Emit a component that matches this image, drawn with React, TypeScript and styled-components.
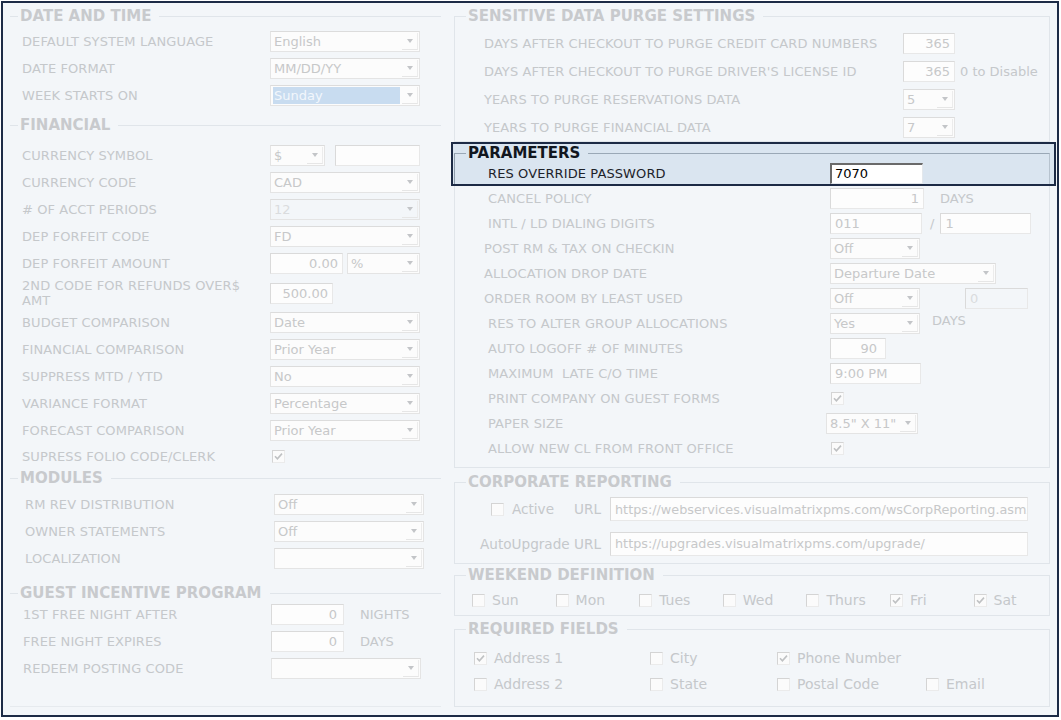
import React from 'react';
import styled, { createGlobalStyle } from 'styled-components';

const GlobalStyle = createGlobalStyle`
  html, body {
    margin: 0;
    padding: 0;
    background: #ffffff;
  }
`;

const line = '#e0e5ea';
const fadedText = '#c5c8cb';
const fieldText = '#c7c8c9';

const Page = styled.div`
  box-sizing: border-box;
  width: 1058px;
  height: 716px;
  margin: 1px 0 0 1px;
  border: 2px solid #1d2b46;
  background: #f3f6f9;
  display: flex;
  font-family: 'DejaVu Sans', Verdana, sans-serif;
  font-size: 13px;
  color: ${fadedText};
  overflow: hidden;
`;

const LeftColumn = styled.div`
  box-sizing: border-box;
  width: 448px;
  padding: 0 10px 8px 7px;
  display: flex;
  flex-direction: column;
`;

const RightColumn = styled.div`
  box-sizing: border-box;
  width: 606px;
  padding: 0 7px 0 3px;
  display: flex;
  flex-direction: column;
`;

const Group = styled.fieldset<{ $mt?: number; $pt?: number; $pb?: number; $box?: boolean; $grow?: boolean; $dark?: boolean }>`
  margin: ${(p) => p.$mt ?? 0}px 0 0 0;
  padding: ${(p) => p.$pt ?? 0}px 0 ${(p) => p.$pb ?? 0}px 0;
  min-width: 0;
  border: 0;
  border-top: 1px solid ${(p) => (p.$dark ? '#9aa8b6' : line)};
  ${(p) => p.$box && `border-left: 1px solid ${line}; border-right: 1px solid ${line}; border-bottom: 1px solid ${line};`}
  ${(p) => p.$dark && `border-left: 1px solid #8e9cab; border-right: 1px solid #b7c3cf;`}
  ${(p) => p.$grow && `flex: 1; border-bottom: 1px solid #e6eaee;`}
`;

const Title = styled.legend<{ $h?: number; $ml?: number; $dark?: boolean }>`
  margin-left: ${(p) => p.$ml ?? 8}px;
  padding: 0 8px 0 2px;
  line-height: ${(p) => p.$h ?? 20}px;
  font-size: 15px;
  font-weight: bold;
  color: ${(p) => (p.$dark ? '#11161e' : '#c8cacd')};
`;

const Row = styled.div<{ $h: number; $indent: number; $label: number }>`
  display: grid;
  grid-template-columns: ${(p) => p.$label}px auto;
  align-items: center;
  height: ${(p) => p.$h}px;
  padding-left: ${(p) => p.$indent}px;
`;

const Label = styled.span<{ $dark?: boolean }>`
  white-space: pre;
  line-height: 15px;
  letter-spacing: 0.1px;
  color: ${(p) => (p.$dark ? '#1d222a' : fadedText)};
`;

const Controls = styled.div`
  display: flex;
  align-items: center;
`;

const SelectBox = styled.div<{ $w: number; $disabled?: boolean }>`
  box-sizing: border-box;
  width: ${(p) => p.$w}px;
  height: 21px;
  display: flex;
  align-items: center;
  padding-left: 2px;
  border: 1px solid #e4e4e4;
  border-top-color: #dcdcdc;
  background: ${(p) => (p.$disabled ? '#f3f6f9' : '#fcfcfc')};
  color: ${(p) => (p.$disabled ? '#dadcde' : fieldText)};
`;

const SelectValue = styled.span<{ $selected?: boolean }>`
  flex: 1;
  height: 17px;
  line-height: 17px;
  padding-left: 1px;
  margin-right: 2px;
  overflow: hidden;
  white-space: nowrap;
  background: ${(p) => (p.$selected ? '#c8dcf0' : 'transparent')};
  color: ${(p) => (p.$selected ? '#f2f7fc' : 'inherit')};
`;

const DropButton = styled.span`
  box-sizing: border-box;
  width: 16px;
  height: 17px;
  margin-right: 1px;
  display: flex;
  align-items: center;
  justify-content: center;
  border-bottom: 1px solid #e6e6e6;
  border-right: 1px solid #ececec;
`;

const Caret = styled.span`
  width: 0;
  height: 0;
  border-left: 3.5px solid transparent;
  border-right: 3.5px solid transparent;
  border-top: 4px solid #c3c5c8;
`;

const TextField = styled.div<{ $w: number; $h?: number; $right?: boolean; $ml?: number; $pr?: number; $disabled?: boolean; $size?: number }>`
  box-sizing: border-box;
  width: ${(p) => p.$w}px;
  height: ${(p) => p.$h ?? 21}px;
  margin-left: ${(p) => p.$ml ?? 0}px;
  padding: 0 ${(p) => p.$pr ?? 4}px 0 4px;
  display: flex;
  align-items: center;
  justify-content: ${(p) => (p.$right ? 'flex-end' : 'flex-start')};
  border: 1px solid #e8e8e8;
  border-top-color: #dadada;
  border-left-color: #dadada;
  background: ${(p) => (p.$disabled ? '#f3f6f9' : '#fdfdfd')};
  color: ${(p) => (p.$disabled ? '#dadcde' : fieldText)};
  font-size: ${(p) => p.$size ?? 13}px;
  white-space: nowrap;
  overflow: hidden;
`;

const PasswordField = styled.div`
  box-sizing: border-box;
  width: 93px;
  height: 21px;
  padding-left: 3px;
  display: flex;
  align-items: center;
  border: 1px solid #e4e8ec;
  border-top: 2px solid #6a6a6a;
  border-left: 2px solid #6a6a6a;
  background: #ffffff;
  color: #000000;
`;

const Unit = styled.span<{ $ml: number; $up?: number }>`
  margin-left: ${(p) => p.$ml}px;
  position: relative;
  top: ${(p) => -(p.$up ?? 0)}px;
  white-space: nowrap;
`;

const Highlight = styled.div`
  margin: 0 -6px 0 -3px;
  padding: 0 4px 0 1px;
  border: 2px solid #1c2a45;
  background: #dae5f0;
`;

const GroupBody = styled.div`
  padding-bottom: 6px;
  border: 1px solid ${line};
  border-top: 0;
`;

const CorpRow = styled.div<{ $h: number }>`
  display: grid;
  grid-template-columns: 155px 418px;
  align-items: center;
  height: ${(p) => p.$h}px;
`;

const CorpLabel = styled.div`
  display: flex;
  align-items: center;
  justify-content: flex-end;
  padding-right: 9px;
  gap: 8px;
  font-size: 13.6px;
  white-space: nowrap;
`;

const UrlLabel = styled.span`
  margin-left: 12px;
`;

const CheckGrid = styled.div<{ $cols: string; $h: number; $indent: number }>`
  display: grid;
  grid-template-columns: ${(p) => p.$cols};
  grid-auto-rows: ${(p) => p.$h}px;
  align-items: center;
  padding-left: ${(p) => p.$indent}px;
`;

const CheckItem = styled.label`
  display: flex;
  align-items: center;
  gap: 7px;
  font-size: 14px;
  white-space: nowrap;
`;

const Box = styled.span`
  box-sizing: border-box;
  width: 13px;
  height: 13px;
  display: inline-flex;
  align-items: center;
  justify-content: center;
  border: 1px solid #ebebeb;
  border-top-color: #d4d4d4;
  border-left-color: #d4d4d4;
  background: #fbfbfb;
  flex: none;
`;

function Check({ checked }: { checked?: boolean }) {
  return (
    <Box>
      {checked && (
        <svg width="9" height="9" viewBox="0 0 9 9">
          <path d="M1 4.2 L3.4 6.8 L8 1.6" fill="none" stroke="#bfc1c3" strokeWidth="1.6" />
        </svg>
      )}
    </Box>
  );
}

function Select({ w, value = '', disabled, selected }: { w: number; value?: string; disabled?: boolean; selected?: boolean }) {
  return (
    <SelectBox $w={w} $disabled={disabled}>
      <SelectValue $selected={selected}>{value}</SelectValue>
      <DropButton>
        <Caret />
      </DropButton>
    </SelectBox>
  );
}

const weekend = [
  { day: 'Sun', on: false },
  { day: 'Mon', on: false },
  { day: 'Tues', on: false },
  { day: 'Wed', on: false },
  { day: 'Thurs', on: false },
  { day: 'Fri', on: true },
  { day: 'Sat', on: true },
];

const required = [
  { name: 'Address 1', on: true },
  { name: 'City', on: false },
  { name: 'Phone Number', on: true },
  { name: '', on: false },
  { name: 'Address 2', on: false },
  { name: 'State', on: false },
  { name: 'Postal Code', on: false },
  { name: 'Email', on: false },
];

export default function App() {
  return (
    <>
      <GlobalStyle />
      <Page>
        <LeftColumn>
          <Group $mt={3} $pt={2}>
            <Title>DATE AND TIME</Title>
            <Row $h={27} $indent={12} $label={248}>
              <Label>DEFAULT SYSTEM LANGUAGE</Label>
              <Select w={150} value="English" />
            </Row>
            <Row $h={27} $indent={12} $label={248}>
              <Label>DATE FORMAT</Label>
              <Select w={150} value="MM/DD/YY" />
            </Row>
            <Row $h={27} $indent={12} $label={248}>
              <Label>WEEK STARTS ON</Label>
              <Select w={150} value="Sunday" selected />
            </Row>
          </Group>

          <Group $mt={6} $pt={7}>
            <Title>FINANCIAL</Title>
            <Row $h={27} $indent={12} $label={248}>
              <Label>CURRENCY SYMBOL</Label>
              <Controls>
                <Select w={55} value="$" />
                <TextField $w={85} $ml={10} />
              </Controls>
            </Row>
            <Row $h={27} $indent={12} $label={248}>
              <Label>CURRENCY CODE</Label>
              <Select w={150} value="CAD" />
            </Row>
            <Row $h={27} $indent={12} $label={248}>
              <Label># OF ACCT PERIODS</Label>
              <Select w={150} value="12" disabled />
            </Row>
            <Row $h={27} $indent={12} $label={248}>
              <Label>DEP FORFEIT CODE</Label>
              <Select w={150} value="FD" />
            </Row>
            <Row $h={27} $indent={12} $label={248}>
              <Label>DEP FORFEIT AMOUNT</Label>
              <Controls>
                <TextField $w={73} $right>0.00</TextField>
                <Controls style={{ marginLeft: 4 }}>
                  <Select w={73} value="%" />
                </Controls>
              </Controls>
            </Row>
            <Row $h={32} $indent={12} $label={248}>
              <Label>
                2ND CODE FOR REFUNDS OVER$
                <br />
                AMT
              </Label>
              <TextField $w={63} $right>500.00</TextField>
            </Row>
            <Row $h={27} $indent={12} $label={248}>
              <Label>BUDGET COMPARISON</Label>
              <Select w={150} value="Date" />
            </Row>
            <Row $h={27} $indent={12} $label={248}>
              <Label>FINANCIAL COMPARISON</Label>
              <Select w={150} value="Prior Year" />
            </Row>
            <Row $h={27} $indent={12} $label={248}>
              <Label>SUPPRESS MTD / YTD</Label>
              <Select w={150} value="No" />
            </Row>
            <Row $h={27} $indent={12} $label={248}>
              <Label>VARIANCE FORMAT</Label>
              <Select w={150} value="Percentage" />
            </Row>
            <Row $h={27} $indent={12} $label={248}>
              <Label>FORECAST COMPARISON</Label>
              <Select w={150} value="Prior Year" />
            </Row>
            <Row $h={24} $indent={12} $label={250}>
              <Label>SUPRESS FOLIO CODE/CLERK</Label>
              <Check checked />
            </Row>
          </Group>

          <Group $pt={3}>
            <Title>MODULES</Title>
            <Row $h={27} $indent={15} $label={249}>
              <Label>RM REV DISTRIBUTION</Label>
              <Select w={150} value="Off" />
            </Row>
            <Row $h={27} $indent={15} $label={249}>
              <Label>OWNER STATEMENTS</Label>
              <Select w={150} value="Off" />
            </Row>
            <Row $h={27} $indent={15} $label={249}>
              <Label>LOCALIZATION</Label>
              <Select w={150} />
            </Row>
          </Group>

          <Group $mt={13} $grow>
            <Title $h={16}>GUEST INCENTIVE PROGRAM</Title>
            <Row $h={27} $indent={13} $label={248}>
              <Label>1ST FREE NIGHT AFTER</Label>
              <Controls>
                <TextField $w={73} $right $pr={6}>0</TextField>
                <Unit $ml={16}>NIGHTS</Unit>
              </Controls>
            </Row>
            <Row $h={27} $indent={13} $label={248}>
              <Label>FREE NIGHT EXPIRES</Label>
              <Controls>
                <TextField $w={73} $right $pr={6}>0</TextField>
                <Unit $ml={16}>DAYS</Unit>
              </Controls>
            </Row>
            <Row $h={27} $indent={13} $label={248}>
              <Label>REDEEM POSTING CODE</Label>
              <Select w={150} />
            </Row>
          </Group>
        </LeftColumn>

        <RightColumn>
          <Group $mt={3} $pt={3} $box>
            <Title $ml={11}>SENSITIVE DATA PURGE SETTINGS</Title>
            <Row $h={28} $indent={29} $label={419}>
              <Label>DAYS AFTER CHECKOUT TO PURGE CREDIT CARD NUMBERS</Label>
              <TextField $w={52} $right>365</TextField>
            </Row>
            <Row $h={28} $indent={29} $label={419}>
              <Label>DAYS AFTER CHECKOUT TO PURGE DRIVER'S LICENSE ID</Label>
              <Controls>
                <TextField $w={52} $right>365</TextField>
                <Unit $ml={5}>0 to Disable</Unit>
              </Controls>
            </Row>
            <Row $h={28} $indent={29} $label={419}>
              <Label>YEARS TO PURGE RESERVATIONS DATA</Label>
              <Select w={52} value="5" />
            </Row>
            <Row $h={28} $indent={29} $label={419}>
              <Label>YEARS TO PURGE FINANCIAL DATA</Label>
              <Select w={52} value="7" />
            </Row>
          </Group>

          <Highlight>
            <Group $dark>
              <Title $ml={11} $h={18} $dark>
                PARAMETERS
              </Title>
              <Row $h={22} $indent={33} $label={342}>
                <Label $dark>RES OVERRIDE PASSWORD</Label>
                <PasswordField>7070</PasswordField>
              </Row>
            </Group>
          </Highlight>
          <GroupBody>
            <Row $h={25} $indent={33} $label={342}>
              <Label>CANCEL POLICY</Label>
              <Controls>
                <TextField $w={94} $right>1</TextField>
                <Unit $ml={16}>DAYS</Unit>
              </Controls>
            </Row>
            <Row $h={25} $indent={33} $label={342}>
              <Label>INTL / LD DIALING DIGITS</Label>
              <Controls>
                <TextField $w={92}>011</TextField>
                <Unit $ml={8}>/</Unit>
                <TextField $w={91} $ml={6}>1</TextField>
              </Controls>
            </Row>
            <Row $h={25} $indent={29} $label={346}>
              <Label>POST RM &amp; TAX ON CHECKIN</Label>
              <Select w={90} value="Off" />
            </Row>
            <Row $h={25} $indent={29} $label={346}>
              <Label>ALLOCATION DROP DATE</Label>
              <Select w={166} value="Departure Date" />
            </Row>
            <Row $h={25} $indent={29} $label={346}>
              <Label>ORDER ROOM BY LEAST USED</Label>
              <Controls>
                <Select w={90} value="Off" />
                <TextField $w={63} $ml={45} $disabled>
                  0
                </TextField>
              </Controls>
            </Row>
            <Row $h={25} $indent={33} $label={342}>
              <Label>RES TO ALTER GROUP ALLOCATIONS</Label>
              <Controls>
                <Select w={90} value="Yes" />
                <Unit $ml={12} $up={3}>
                  DAYS
                </Unit>
              </Controls>
            </Row>
            <Row $h={25} $indent={33} $label={342}>
              <Label>AUTO LOGOFF # OF MINUTES</Label>
              <TextField $w={56} $right $pr={8}>
                90
              </TextField>
            </Row>
            <Row $h={25} $indent={33} $label={342}>
              <Label>MAXIMUM  LATE C/O TIME</Label>
              <TextField $w={91}>9:00 PM</TextField>
            </Row>
            <Row $h={25} $indent={33} $label={343}>
              <Label>PRINT COMPANY ON GUEST FORMS</Label>
              <Check checked />
            </Row>
            <Row $h={25} $indent={33} $label={338}>
              <Label>PAPER SIZE</Label>
              <Select w={92} value={'8.5" X 11"'} />
            </Row>
            <Row $h={25} $indent={33} $label={343}>
              <Label>ALLOW NEW CL FROM FRONT OFFICE</Label>
              <Check checked />
            </Row>
          </GroupBody>

          <Group $mt={4} $pb={2} $box>
            <Title $ml={11}>CORPORATE REPORTING</Title>
            <CorpRow $h={34}>
              <CorpLabel>
                <Check />
                <span>Active</span>
                <UrlLabel>URL</UrlLabel>
              </CorpLabel>
              <TextField $w={418} $h={24} $size={12.8}>
                https://webservices.visualmatrixpms.com/wsCorpReporting.asmx
              </TextField>
            </CorpRow>
            <CorpRow $h={35}>
              <CorpLabel>AutoUpgrade URL</CorpLabel>
              <TextField $w={418} $h={24} $size={12.8}>
                https://upgrades.visualmatrixpms.com/upgrade/
              </TextField>
            </CorpRow>
          </Group>

          <Group $mt={1} $box>
            <Title $ml={11}>WEEKEND DEFINITION</Title>
            <CheckGrid $cols="repeat(7, 83.6px)" $h={30} $indent={17}>
              {weekend.map((d) => (
                <CheckItem key={d.day}>
                  <Check checked={d.on} />
                  {d.day}
                </CheckItem>
              ))}
            </CheckGrid>
          </Group>

          <Group $mt={3} $pt={6} $pb={9} $box>
            <Title $ml={11}>REQUIRED FIELDS</Title>
            <CheckGrid $cols="176px 127px 149px 1fr" $h={26} $indent={19}>
              {required.map((f, i) =>
                f.name ? (
                  <CheckItem key={f.name}>
                    <Check checked={f.on} />
                    {f.name}
                  </CheckItem>
                ) : (
                  <span key={i} />
                ),
              )}
            </CheckGrid>
          </Group>
        </RightColumn>
      </Page>
    </>
  );
}
